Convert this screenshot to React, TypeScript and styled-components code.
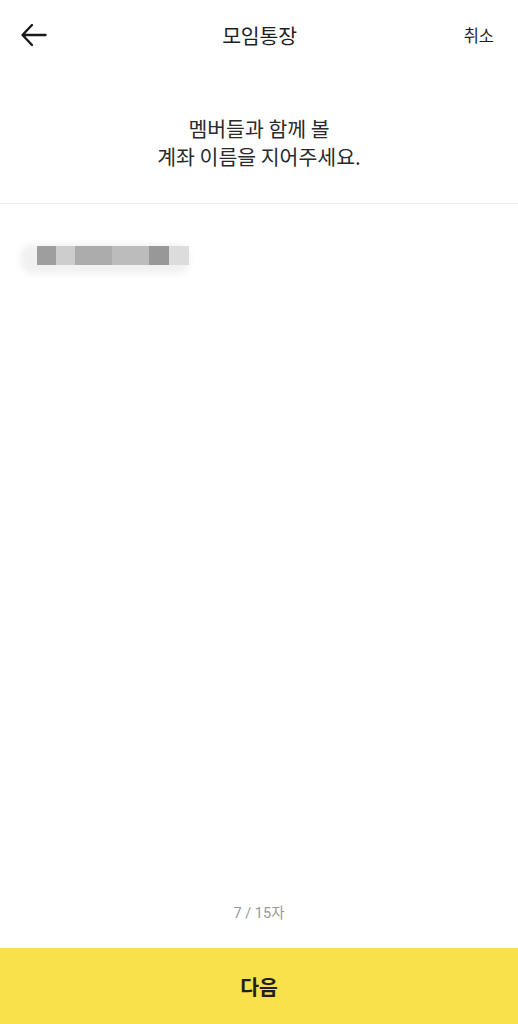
import React from 'react'
import styled, { createGlobalStyle } from 'styled-components'

const GlobalStyle = createGlobalStyle`
  html, body {
    margin: 0;
    padding: 0;
    background: #ffffff;
  }
  body {
    font-family: "Noto Sans CJK KR", "Noto Sans", sans-serif;
    color: #1c1c1c;
  }
`

const Page = styled.div`
  display: flex;
  flex-direction: column;
  min-height: 100vh;
  background: #fff;
`

const Header = styled.header`
  display: grid;
  grid-template-columns: 60px 1fr 60px;
  align-items: center;
  height: 70px;
  padding: 0 0 0 20px;
  box-sizing: border-box;
`

const BackButton = styled.button`
  display: flex;
  align-items: center;
  justify-content: flex-start;
  padding: 0;
  border: none;
  background: none;
  cursor: pointer;
  color: #1a1a1a;
`

const Title = styled.h1`
  margin: 0;
  padding-right: 19px;
  text-align: center;
  font-size: 20.5px;
  font-weight: 400;
  color: #1e1e1e;
  letter-spacing: -0.2px;
`

const Cancel = styled.button`
  justify-self: end;
  padding: 0 24px 0 0;
  border: none;
  background: none;
  font-family: inherit;
  font-size: 16.5px;
  font-weight: 400;
  color: #1e1e1e;
  white-space: nowrap;
  cursor: pointer;
`

const Guide = styled.p`
  margin: 0;
  padding: 44px 20px 33px;
  text-align: center;
  font-size: 20.5px;
  line-height: 28px;
  font-weight: 400;
  color: #2a2a2a;
  border-bottom: 1px solid #efefef;
`

const InputArea = styled.div`
  flex: 1;
  padding: 38px 20px 0;
`

const Mosaic = styled.div`
  position: relative;
  display: flex;
  width: 170px;
  height: 34px;
`

const Smudge = styled.div`
  position: absolute;
  left: 0;
  top: 2px;
  width: 170px;
  height: 30px;
  border-radius: 14px;
  background: #f1f1f1;
  filter: blur(3px);
`

const Cell = styled.div<{ $tone: string; $w: number }>`
  position: relative;
  width: ${p => p.$w}px;
  height: 19px;
  margin-top: 4px;
  background: ${p => p.$tone};
`

const Counter = styled.div`
  padding-bottom: 26px;
  text-align: center;
  font-family: Roboto, "Noto Sans CJK KR", sans-serif;
  font-size: 14.5px;
  color: #9a9a9a;
`

const NextButton = styled.button`
  height: 76px;
  border: none;
  background: #f8e14b;
  font-family: inherit;
  font-size: 20.5px;
  font-weight: 700;
  color: #1e1e1e;
  cursor: pointer;
`

const cells = [
  { tone: 'transparent', w: 17 },
  { tone: '#9e9e9e', w: 19 },
  { tone: '#cdcdcd', w: 19 },
  { tone: '#acacac', w: 37 },
  { tone: '#bcbcbc', w: 37 },
  { tone: '#989898', w: 20 },
  { tone: '#dcdcdc', w: 20 },
]

export default function App() {
  return (
    <Page>
      <GlobalStyle />
      <Header>
        <BackButton aria-label="뒤로">
          <svg width="27" height="24" viewBox="0 0 27 24" fill="none">
            <path
              d="M25.5 12H3M12 2L2.5 12L12 22"
              stroke="currentColor"
              strokeWidth="2.4"
              strokeLinecap="round"
              strokeLinejoin="round"
            />
          </svg>
        </BackButton>
        <Title>모임통장</Title>
        <Cancel>취소</Cancel>
      </Header>
      <Guide>
        멤버들과 함께 볼
        <br />
        계좌 이름을 지어주세요.
      </Guide>
      <InputArea>
        <Mosaic>
          <Smudge />
          {cells.map((c, i) => (
            <Cell key={i} $tone={c.tone} $w={c.w} />
          ))}
        </Mosaic>
      </InputArea>
      <Counter>7 / 15자</Counter>
      <NextButton>다음</NextButton>
    </Page>
  )
}
